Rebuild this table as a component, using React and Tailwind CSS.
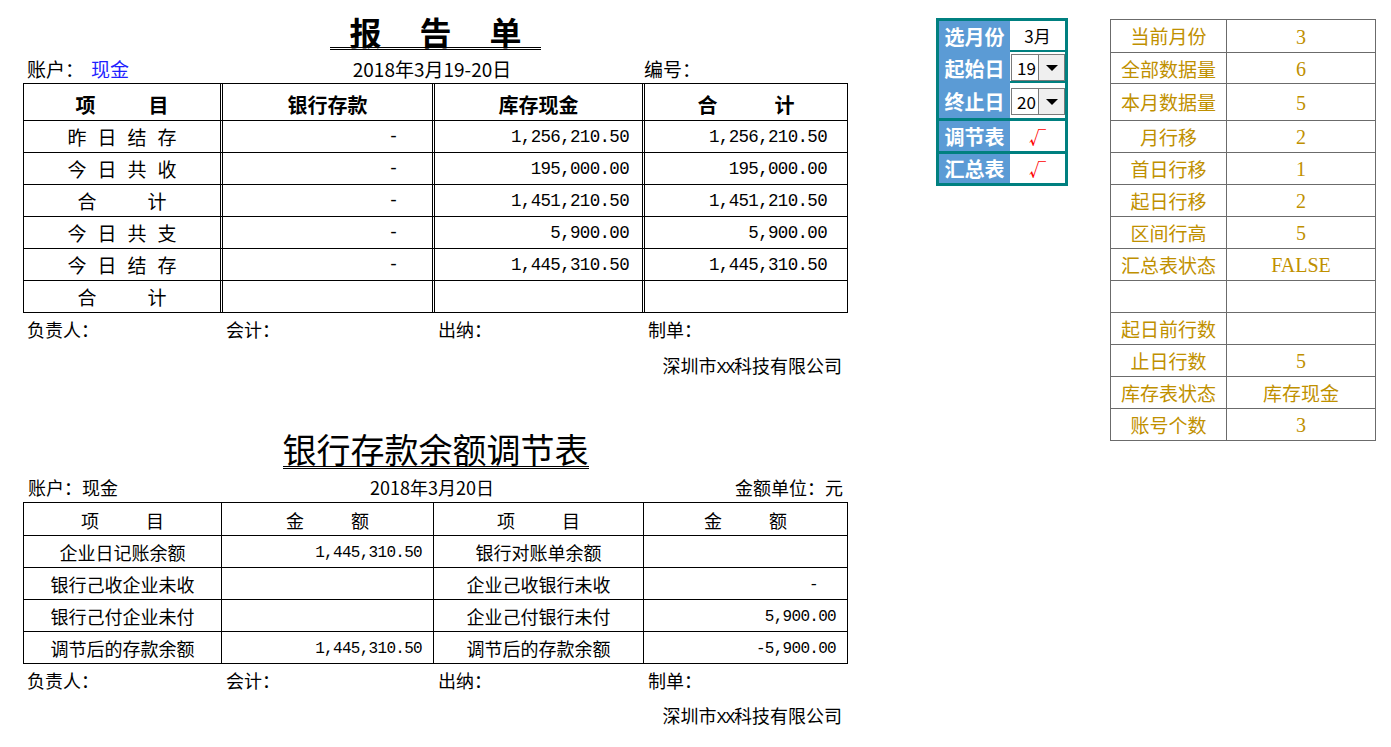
const topRows = [
  { label: ['昨', '日', '结', '存'], bank: '-', cash: '1,256,210.50', total: '1,256,210.50' },
  { label: ['今', '日', '共', '收'], bank: '-', cash: '195,000.00', total: '195,000.00' },
  { label: ['合', '计'], bank: '-', cash: '1,451,210.50', total: '1,451,210.50' },
  { label: ['今', '日', '共', '支'], bank: '-', cash: '5,900.00', total: '5,900.00' },
  { label: ['今', '日', '结', '存'], bank: '-', cash: '1,445,310.50', total: '1,445,310.50' },
  { label: ['合', '计'], bank: '', cash: '', total: '' },
]

const recRows = [
  { left: '企业日记账余额', leftAmt: '1,445,310.50', right: '银行对账单余额', rightAmt: '' },
  { left: '银行己收企业未收', leftAmt: '', right: '企业己收银行未收', rightAmt: '-' },
  { left: '银行己付企业未付', leftAmt: '', right: '企业己付银行未付', rightAmt: '5,900.00' },
  { left: '调节后的存款余额', leftAmt: '1,445,310.50', right: '调节后的存款余额', rightAmt: '-5,900.00' },
]

const stats = [
  ['当前月份', '3', 'h-[32px]'],
  ['全部数据量', '6', 'h-[31px] border-t'],
  ['本月数据量', '5', 'h-[37px] border-t'],
  ['月行移', '2', 'h-[32px] border-t'],
  ['首日行移', '1', 'h-[32px] border-t'],
  ['起日行移', '2', 'h-[32px] border-t'],
  ['区间行高', '5', 'h-[32px] border-t'],
  ['汇总表状态', 'FALSE', 'h-[32px] border-t'],
  ['', '', 'h-[32px] border-t'],
  ['起日前行数', '', 'h-[32px] border-t'],
  ['止日行数', '5', 'h-[32px] border-t'],
  ['库存表状态', '库存现金', 'h-[32px] border-t'],
  ['账号个数', '3', 'h-[32px] border-t'],
]

const mono = "font-['Liberation_Mono',monospace]"

function Spread({ chars, gap }) {
  return (
    <div className={`flex items-center justify-center ${gap}`}>
      {chars.map((c, i) => <span key={i}>{c}</span>)}
    </div>
  )
}

function Signatures() {
  return (
    <div className="grid grid-cols-[198px_212px_210px_205px] h-[32px] items-center text-[18px]">
      <div className="pl-[4px]">负责人：</div>
      <div className="pl-[5px]">会计：</div>
      <div className="pl-[5px]">出纳：</div>
      <div className="pl-[5px]">制单：</div>
    </div>
  )
}

function Company({ h }) {
  return (
    <div className={`${h} text-right pr-[6px] text-[18px]`}>
      深圳市<span className={`${mono} text-[17px] tracking-[-1.5px]`}>XX</span>科技有限公司
    </div>
  )
}

function Combo({ value }) {
  return (
    <div className="flex h-[27px] w-[54px] border border-[#7a7a7a] bg-white">
      <div className="flex-1 flex items-center pl-[5px] text-[17px] font-normal text-black">{value}</div>
      <div className="w-[26px] border-l border-[#7a7a7a] bg-[#efefef] flex items-center justify-center">
        <svg width="12" height="6" viewBox="0 0 12 6"><path d="M0 0h12L6 6z" fill="#000" /></svg>
      </div>
    </div>
  )
}

function ReportTable() {
  const cols = 'grid grid-cols-[196px_212px_210px_205px]'
  const dbl = 'border-l-[3px] border-double border-black'
  const num = `${mono} text-[17.5px] tracking-[-0.67px]`
  return (
    <div className="border border-black">
      <div className={`${cols} h-[36px] font-bold text-[20px]`}>
        <div className="flex items-center justify-center pt-[5px]">
          <Spread chars={['项', '目']} gap="gap-[53px]" />
        </div>
        <div className={`${dbl} flex items-center justify-center pt-[5px]`}>银行存款</div>
        <div className={`${dbl} flex items-center justify-center pt-[5px]`}>库存现金</div>
        <div className={`${dbl} flex items-center justify-center pt-[5px]`}>
          <Spread chars={['合', '计']} gap="gap-[57px]" />
        </div>
      </div>
      {topRows.map((r, i) => (
        <div key={i} className={`${cols} h-[32px] border-t border-black text-[19px]`}>
          <div className="flex items-center justify-center pt-[2px]">
            <Spread chars={r.label} gap={r.label.length === 2 ? 'gap-[51px]' : 'gap-[11px]'} />
          </div>
          <div className={`${dbl} flex items-center justify-end pr-[34px] pt-[2px] ${num}`}>{r.bank}</div>
          <div className={`${dbl} flex items-center justify-end pr-[13px] pt-[2px] ${num}`}>{r.cash}</div>
          <div className={`${dbl} flex items-center justify-end pr-[20px] pt-[2px] ${num}`}>{r.total}</div>
        </div>
      ))}
    </div>
  )
}

function RecTable() {
  const cols = 'grid grid-cols-[197px_212px_210px_204px]'
  const num = `${mono} text-[16px] tracking-[-0.7px]`
  return (
    <div className="border border-black text-[18px]">
      <div className={`${cols} h-[32px]`}>
        <div className="flex items-center justify-center pt-[2px]"><Spread chars={['项', '目']} gap="gap-[47px]" /></div>
        <div className="border-l border-black flex items-center justify-center pt-[2px]"><Spread chars={['金', '额']} gap="gap-[47px]" /></div>
        <div className="border-l border-black flex items-center justify-center pt-[2px]"><Spread chars={['项', '目']} gap="gap-[47px]" /></div>
        <div className="border-l border-black flex items-center justify-center pt-[2px]"><Spread chars={['金', '额']} gap="gap-[47px]" /></div>
      </div>
      {recRows.map((r, i) => (
        <div key={i} className={`${cols} h-[32px] border-t border-black`}>
          <div className="flex items-center justify-center pt-[2px]">{r.left}</div>
          <div className={`border-l border-black flex items-center justify-end pr-[11px] pt-[2px] ${num}`}>{r.leftAmt}</div>
          <div className="border-l border-black flex items-center justify-center pt-[2px]">{r.right}</div>
          <div className={`border-l border-black flex items-center justify-end pt-[2px] ${num} ${r.rightAmt === '-' ? 'pr-[29px]' : 'pr-[11px]'}`}>{r.rightAmt}</div>
        </div>
      ))}
    </div>
  )
}

export default function App() {
  return (
    <div className="flex items-start w-[1391px] h-[747px] bg-white text-black font-['Noto_Sans_CJK_SC',sans-serif] overflow-hidden">
      <div className="ml-[23px] w-[825px] flex flex-col">
        <div className="flex justify-center pt-[15px]">
          <div className="flex gap-[38px] px-[19px] border-b-[3px] border-double border-black text-[32px] leading-[32px] font-bold">
            <span>报</span><span>告</span><span>单</span>
          </div>
        </div>
        <div className="grid grid-cols-[198px_422px_205px] h-[33px] items-end pb-[4px] text-[19px] leading-[20px]">
          <div className="pl-[4px]">账户：<span className="ml-[7px] text-[#1f1fff]">现金</span></div>
          <div className="text-center">2018年3月19-20日</div>
          <div className="pl-[1px]">编号：</div>
        </div>
        <ReportTable />
        <Signatures />
        <Company h="h-[40px] pt-[7px] leading-[26px]" />

        <div className="flex justify-center pt-[47px]">
          <div className="border-b-[3px] border-double border-black text-[34px] leading-[34px]">银行存款余额调节表</div>
        </div>
        <div className="grid grid-cols-[198px_422px_205px] h-[33px] items-end pb-[5px] text-[18px] leading-[19px]">
          <div className="pl-[5px]">账户：现金</div>
          <div className="text-center">2018年3月20日</div>
          <div className="text-right pr-[5px]">金额单位：元</div>
        </div>
        <RecTable />
        <Signatures />
        <Company h="h-[38px] pt-[6px] leading-[26px]" />
      </div>

      <div className="mt-[18px] ml-[88px] w-[132px] border-[3px] border-[#008080] flex flex-col text-white font-bold text-[20px]">
        <div className="flex">
          <div className="w-[71px] bg-[#5b9bd5] flex flex-col">
            <div className="h-[31px] flex items-center justify-center pt-[1px]">选月份</div>
            <div className="h-[31px] flex items-center justify-center pt-[2px]">起始日</div>
            <div className="h-[35px] flex items-center justify-center pt-[3px]">终止日</div>
          </div>
          <div className="w-[55px] flex flex-col bg-white">
            <div className="h-[31px] border-b-2 border-[#008080] flex items-center justify-center text-black font-normal text-[17px]">3月</div>
            <div className="h-[31px] border-b-2 border-[#008080] pt-[2px] pl-[1px]"><Combo value="19" /></div>
            <div className="h-[35px] pt-[5px] pl-[1px]"><Combo value="20" /></div>
          </div>
        </div>
        <div className="h-[3px] bg-[#008080]" />
        <div className="flex h-[30px]">
          <div className="w-[71px] bg-[#5b9bd5] flex items-center justify-center pt-[2px]">调节表</div>
          <div className="w-[55px] bg-white flex items-center justify-center text-[#ff0000] text-[17px] pt-[2px]">√</div>
        </div>
        <div className="h-[3px] bg-[#008080]" />
        <div className="flex h-[29px]">
          <div className="w-[71px] bg-[#5b9bd5] flex items-center justify-center pt-[1px]">汇总表</div>
          <div className="w-[55px] bg-white flex items-center justify-center text-[#ff0000] text-[17px] pt-[1px]">√</div>
        </div>
      </div>

      <div className="mt-[19px] ml-[42px] w-[266px] border border-[#6b6b6b] text-[#bf9000] text-[19px]">
        {stats.map(([k, v, h], i) => (
          <div key={i} className={`grid grid-cols-[116px_148px] border-[#6b6b6b] ${h}`}>
            <div className="border-r border-[#6b6b6b] flex items-center justify-center pt-[1px]">{k}</div>
            <div className={`flex items-center justify-center pt-[1px] ${/^[0-9A-Z]+$/.test(v) ? "font-['Liberation_Serif',serif] text-[20px]" : ''}`}>{v}</div>
          </div>
        ))}
      </div>
    </div>
  )
}
